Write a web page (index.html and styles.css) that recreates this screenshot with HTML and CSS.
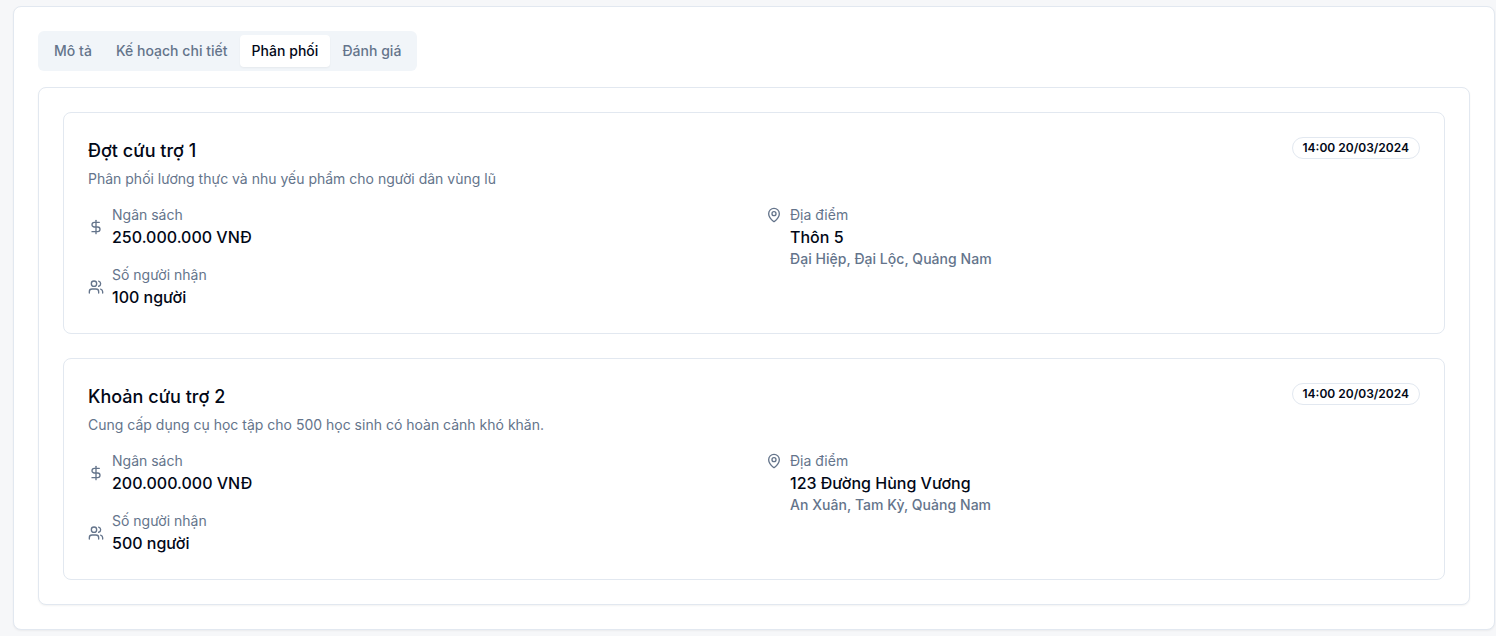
FILE: index.html
```html
<!DOCTYPE html>
<html lang="vi">
<head>
<meta charset="utf-8">
<title>Phân phối</title>
<link rel="stylesheet" href="styles.css">
</head>
<body>
<svg width="0" height="0" class="sprite" aria-hidden="true">
  <symbol id="dollar" viewBox="0 0 24 24"><line x1="12" x2="12" y1="2" y2="22"/><path d="M17 5H9.5a3.5 3.5 0 0 0 0 7h5a3.5 3.5 0 0 1 0 7H6"/></symbol>
  <symbol id="users" viewBox="0 0 24 24"><path d="M16 21v-2a4 4 0 0 0-4-4H6a4 4 0 0 0-4 4v2"/><circle cx="9" cy="7" r="4"/><path d="M22 21v-2a4 4 0 0 0-3-3.87"/><path d="M16 3.13a4 4 0 0 1 0 7.75"/></symbol>
  <symbol id="pin" viewBox="0 0 24 24"><path d="M20 10c0 4.993-5.539 10.193-7.399 11.799a1 1 0 0 1-1.202 0C9.539 20.193 4 14.993 4 10a8 8 0 0 1 16 0"/><circle cx="12" cy="10" r="3"/></symbol>
</svg>
<main class="card">
  <nav class="tabs">
    <button class="tab">Mô tả</button>
    <button class="tab">Kế hoạch chi tiết</button>
    <button class="tab tab-active">Phân phối</button>
    <button class="tab">Đánh giá</button>
  </nav>
  <section class="card panel">
    <article class="phase">
      <header class="phase-header">
        <div>
          <h3 class="title">Đợt cứu trợ 1</h3>
          <p class="description">Phân phối lương thực và nhu yếu phẩm cho người dân vùng lũ</p>
        </div>
        <span class="badge">14:00 20/03/2024</span>
      </header>
      <div class="details">
        <div class="column">
          <div class="item"><svg class="icon"><use href="#dollar"/></svg><div><p class="label">Ngân sách</p><p class="value">250.000.000 VNĐ</p></div></div>
          <div class="item"><svg class="icon"><use href="#users"/></svg><div><p class="label">Số người nhận</p><p class="value">100 người</p></div></div>
        </div>
        <div class="item item-top"><svg class="icon"><use href="#pin"/></svg><div><p class="label">Địa điểm</p><p class="value">Thôn 5</p><p class="address">Đại Hiệp, Đại Lộc, Quảng Nam</p></div></div>
      </div>
    </article>
    <article class="phase">
      <header class="phase-header">
        <div>
          <h3 class="title">Khoản cứu trợ 2</h3>
          <p class="description">Cung cấp dụng cụ học tập cho 500 học sinh có hoàn cảnh khó khăn.</p>
        </div>
        <span class="badge">14:00 20/03/2024</span>
      </header>
      <div class="details">
        <div class="column">
          <div class="item"><svg class="icon"><use href="#dollar"/></svg><div><p class="label">Ngân sách</p><p class="value">200.000.000 VNĐ</p></div></div>
          <div class="item"><svg class="icon"><use href="#users"/></svg><div><p class="label">Số người nhận</p><p class="value">500 người</p></div></div>
        </div>
        <div class="item item-top"><svg class="icon"><use href="#pin"/></svg><div><p class="label">Địa điểm</p><p class="value">123 Đường Hùng Vương</p><p class="address">An Xuân, Tam Kỳ, Quảng Nam</p></div></div>
      </div>
    </article>
  </section>
</main>
</body>
</html>
```
FILE: styles.css
```css
* { box-sizing: border-box; margin: 0; }
body {
  padding: 6px 1px 6px 13px;
  background: #f6f7f9;
  color: #020817;
  font: 16px/24px Inter, sans-serif;
}
.sprite { display: none; }
.card {
  border: 1px solid #e2e8f0;
  border-radius: 8px;
  padding: 24px;
  background: #fff;
  box-shadow: 0 1px 2px rgba(0, 0, 0, .05);
}
.tabs {
  display: flex;
  width: fit-content;
  height: 40px;
  padding: 4px;
  border-radius: 6px;
  background: #f1f5f9;
}
.tab {
  padding: 6px 12px;
  border: 0;
  border-radius: 4px;
  background: transparent;
  color: #64748b;
  font: 500 14px/20px Inter, sans-serif;
  letter-spacing: .025px;
}
.tab-active {
  background: #fff;
  color: #020817;
  box-shadow: 0 1px 2px rgba(0, 0, 0, .05);
}
.panel {
  display: flex;
  flex-direction: column;
  gap: 24px;
  margin-top: 16px;
}
.phase {
  padding: 24px;
  border: 1px solid #e2e8f0;
  border-radius: 8px;
}
.phase-header {
  display: flex;
  justify-content: space-between;
  align-items: flex-start;
}
.title { font-size: 18px; line-height: 28px; font-weight: 500; letter-spacing: .02px; }
.description { margin-top: 4px; }
.description, .label { color: #64748b; font-size: 14px; line-height: 20px; }
.badge {
  padding: 2px 10px;
  border: 1px solid #e2e8f0;
  border-radius: 11px;
  font-size: 12px;
  line-height: 16px;
  font-weight: 600;
}
.details {
  display: grid;
  grid-template-columns: 1fr 1fr;
  gap: 24px;
  margin-top: 16px;
}
.column { display: flex; flex-direction: column; gap: 16px; }
.item { display: flex; align-items: center; gap: 8px; }
.item-top { align-items: flex-start; }
.item-top .icon { margin-top: 2px; }
.icon {
  flex: none;
  width: 16px;
  height: 16px;
  fill: none;
  stroke: #64748b;
  stroke-width: 2;
  stroke-linecap: round;
  stroke-linejoin: round;
}
.value { font-weight: 500; }
.address { color: #64748b; font-size: 14px; line-height: 20px; font-weight: 500; letter-spacing: .04px; }
```
